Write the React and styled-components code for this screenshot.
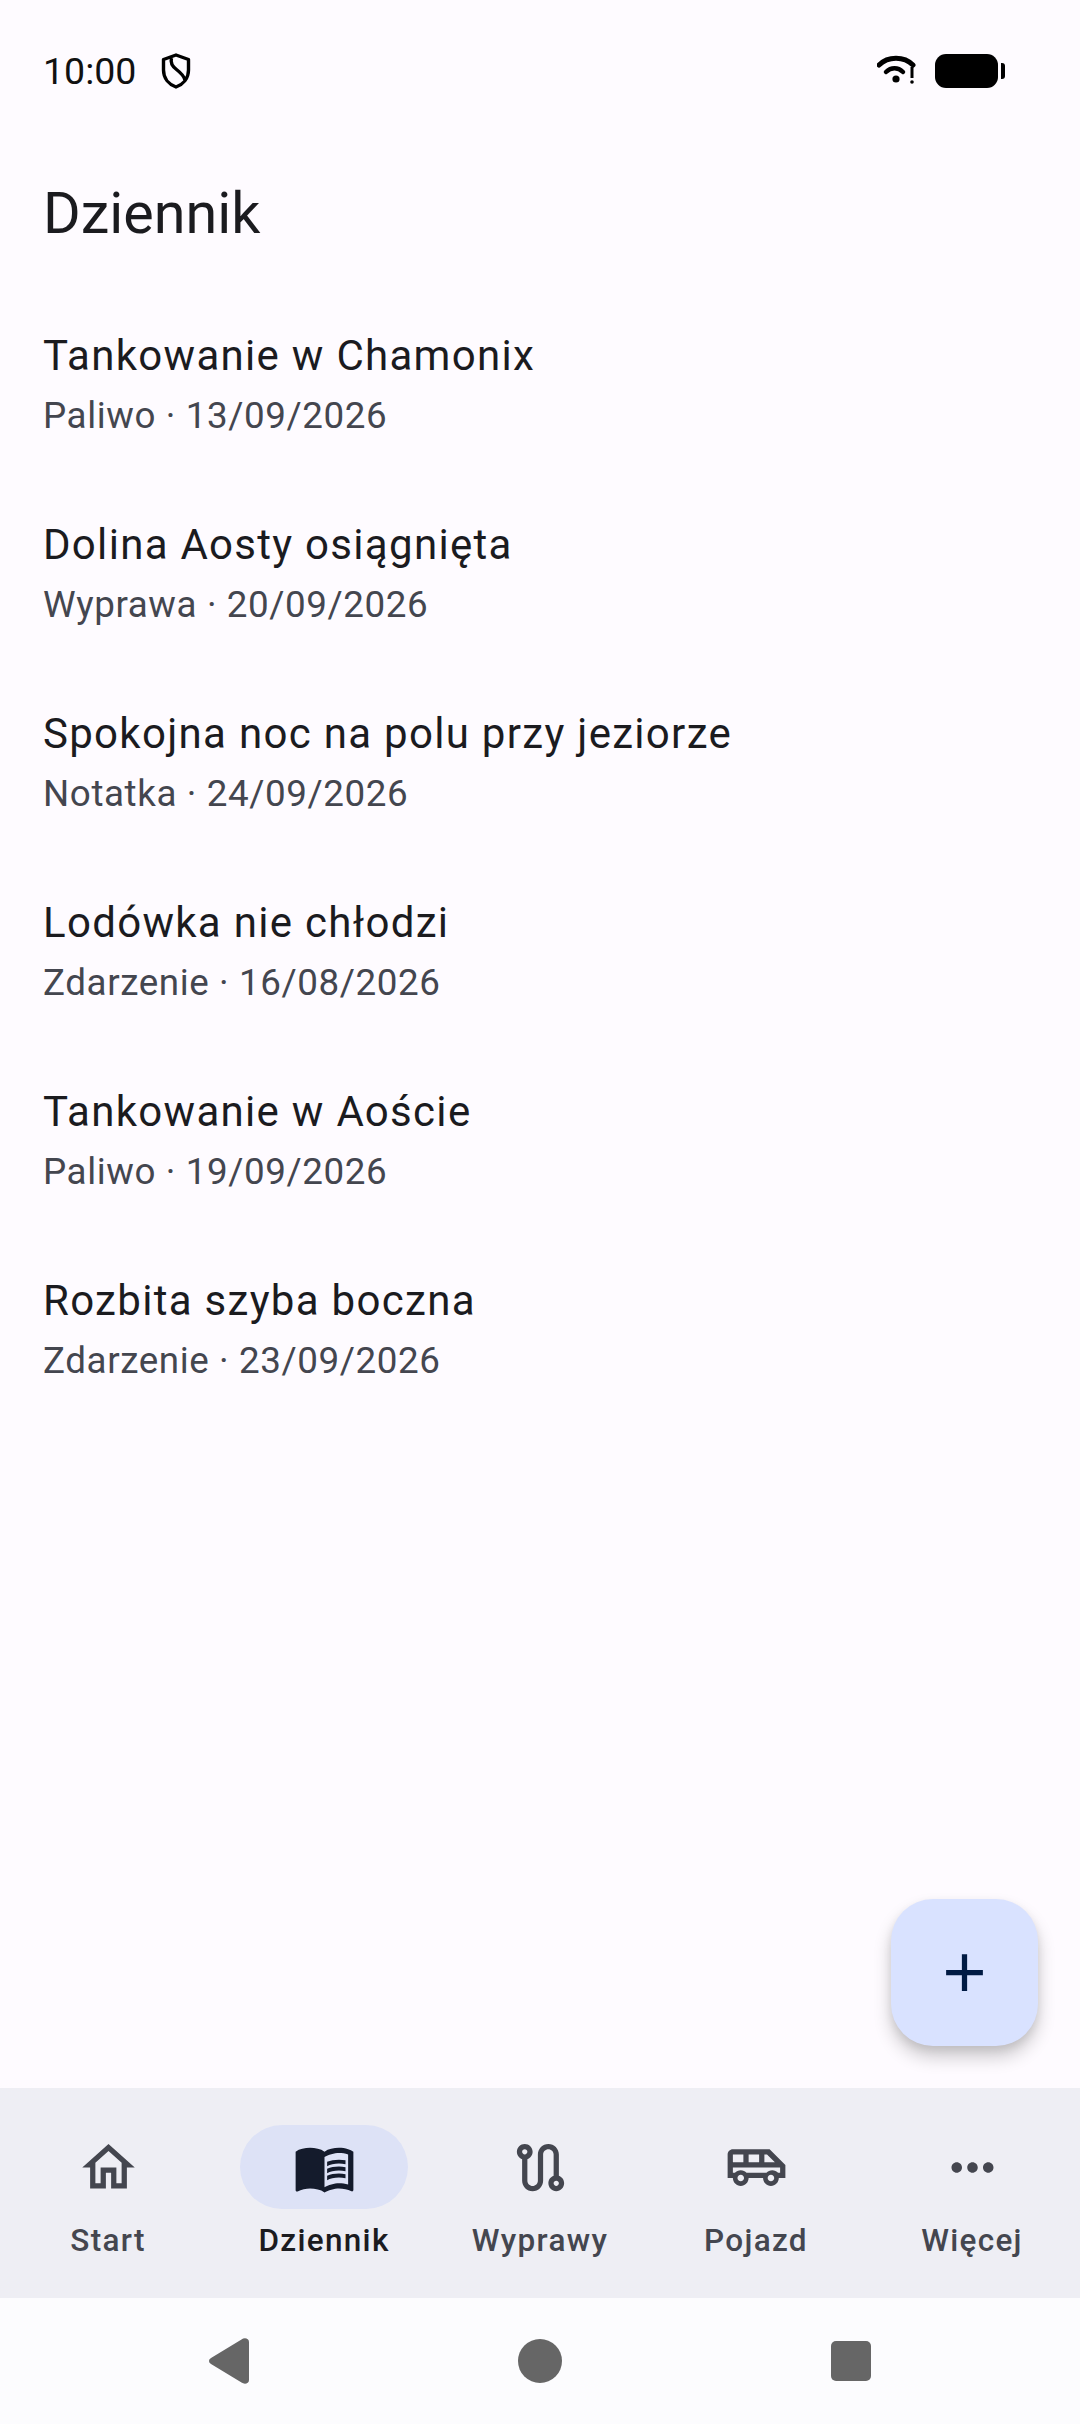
import React from 'react';
import styled, { createGlobalStyle } from 'styled-components';

const ENTRIES = [
  { id: 1, title: 'Tankowanie w Chamonix', meta: 'Paliwo · 13/09/2026' },
  { id: 2, title: 'Dolina Aosty osiągnięta', meta: 'Wyprawa · 20/09/2026' },
  { id: 3, title: 'Spokojna noc na polu przy jeziorze', meta: 'Notatka · 24/09/2026' },
  { id: 4, title: 'Lodówka nie chłodzi', meta: 'Zdarzenie · 16/08/2026' },
  { id: 5, title: 'Tankowanie w Aoście', meta: 'Paliwo · 19/09/2026' },
  { id: 6, title: 'Rozbita szyba boczna', meta: 'Zdarzenie · 23/09/2026' },
];

const HOME = 'M12 5.69l5 4.5V18h-2v-6H9v6H7v-7.81l5-4.5M12 3L2 12h3v8h6v-6h2v6h6v-8h3L12 3z';
const BOOK =
  'M21 5c-1.11-.35-2.33-.5-3.5-.5-1.95 0-4.05.4-5.5 1.5-1.45-1.1-3.55-1.5-5.5-1.5S2.45 4.9 1 6v14.65c0 .25.25.5.5.5.1 0 .15-.05.25-.05C3.1 20.45 5.05 20 6.5 20c1.95 0 4.05.4 5.5 1.5 1.35-.85 3.8-1.5 5.5-1.5 1.65 0 3.35.3 4.75 1.05.1.05.15.05.25.05.25 0 .5-.25.5-.5V6c-.6-.45-1.25-.75-2-1zm0 13.5c-1.1-.35-2.3-.5-3.5-.5-1.7 0-4.15.65-5.5 1.5V8c1.35-.85 3.8-1.5 5.5-1.5 1.2 0 2.4.15 3.5.5v11.5zM17.5 10.5c.88 0 1.73.09 2.5.26V9.24c-.79-.15-1.64-.24-2.5-.24-1.7 0-3.24.29-4.5.83v1.66c1.13-.64 2.7-.99 4.5-.99zM13 12.49v1.66c1.13-.64 2.7-.99 4.5-.99.88 0 1.73.09 2.5.26V11.9c-.79-.15-1.64-.24-2.5-.24-1.7 0-3.24.3-4.5.83zM17.5 14.33c-1.7 0-3.24.29-4.5.83v1.66c1.13-.64 2.7-.99 4.5-.99.88 0 1.73.09 2.5.26v-1.52c-.79-.16-1.64-.24-2.5-.24z';
const ROUTE =
  'M19 15.18V7c0-2.21-1.79-4-4-4s-4 1.79-4 4v10c0 1.1-.9 2-2 2s-2-.9-2-2V8.82C8.16 8.4 9 7.3 9 6c0-1.66-1.34-3-3-3S3 4.34 3 6c0 1.3.84 2.4 2 2.82V17c0 2.21 1.79 4 4 4s4-1.79 4-4V7c0-1.1.9-2 2-2s2 .9 2 2v8.18c-1.16.41-2 1.51-2 2.82 0 1.66 1.34 3 3 3s3-1.34 3-3c0-1.3-.84-2.4-2-2.82zM6 7c-.55 0-1-.45-1-1s.45-1 1-1 1 .45 1 1-.45 1-1 1zm12 12c-.55 0-1-.45-1-1s.45-1 1-1 1 .45 1 1-.45 1-1 1z';
const SHUTTLE =
  'M17 5H3c-1.1 0-2 .89-2 2v9h2c0 1.65 1.34 3 3 3s3-1.35 3-3h5.5c0 1.65 1.34 3 3 3s3-1.35 3-3H23v-5l-6-6zm-2 2h1l3 3h-4V7zM9 7h4v3H9V7zM3 7h4v3H3V7zm3 10.25c-.69 0-1.25-.56-1.25-1.25s.56-1.25 1.25-1.25 1.25.56 1.25 1.25-.56 1.25-1.25 1.25zm11.5 0c-.69 0-1.25-.56-1.25-1.25s.56-1.25 1.25-1.25 1.25.56 1.25 1.25-.56 1.25-1.25 1.25zM21 14h-.78c-.55-.61-1.34-1-2.22-1s-1.67.39-2.22 1H8.22c-.55-.61-1.33-1-2.22-1s-1.67.39-2.22 1H3v-2h18v2z';
const MORE =
  'M6 10c-1.1 0-2 .9-2 2s.9 2 2 2 2-.9 2-2-.9-2-2-2zm12 0c-1.1 0-2 .9-2 2s.9 2 2 2 2-.9 2-2-.9-2-2-2zm-6 0c-1.1 0-2 .9-2 2s.9 2 2 2 2-.9 2-2-.9-2-2-2z';
const ADD = 'M19 13h-6v6h-2v-6H5v-2h6V5h2v6h6v2z';

const TABS = [
  { id: 'start', label: 'Start', icon: HOME },
  { id: 'log', label: 'Dziennik', icon: BOOK, active: true },
  { id: 'trips', label: 'Wyprawy', icon: ROUTE },
  { id: 'vehicle', label: 'Pojazd', icon: SHUTTLE },
  { id: 'more', label: 'Więcej', icon: MORE },
];

const App = () => (
  <Page>
    <GlobalStyle />
    <StatusBar>
      <StatusGroup $gap={25}>
        <Clock>10:00</Clock>
        <svg width="30" height="36" viewBox="0 0 30 36" fill="none" stroke="#000" strokeWidth="3.4">
          <path d="M15 2 L27.5 6.5 V17 C27.5 25.5 22 31.5 15 34 C8 31.5 2.5 25.5 2.5 17 V6.5 Z" strokeLinejoin="round" />
          <path d="M10.5 5 C9 10.5 11.5 13.5 15.5 16.5 C20 20 23 23 24 27" />
        </svg>
      </StatusGroup>
      <StatusGroup $gap={18}>
        <svg width="40" height="32" viewBox="0 0 40 32" fill="none" stroke="#000" strokeLinecap="round">
          <path d="M2 10 C11 1 27 1 36 10" strokeWidth="5" />
          <path d="M9 17 C14 12 21 12 26 17" strokeWidth="4.5" />
          <circle cx="19" cy="24" r="3.6" fill="#000" stroke="none" />
          <path d="M35 12 V23" strokeWidth="3" strokeLinecap="butt" />
          <circle cx="35" cy="27" r="1.8" fill="#000" stroke="none" />
        </svg>
        <Battery />
      </StatusGroup>
    </StatusBar>
    <Header>Dziennik</Header>
    <Main>
      <List>
        {ENTRIES.map(entry => (
          <Row key={entry.id}>
            <RowTitle>{entry.title}</RowTitle>
            <RowMeta>{entry.meta}</RowMeta>
          </Row>
        ))}
      </List>
      <Fab>
        <svg width="63" height="63" viewBox="0 0 24 24" fill="#001A43">
          <path d={ADD} />
        </svg>
      </Fab>
    </Main>
    <BottomNav>
      {TABS.map(tab => (
        <Tab key={tab.id}>
          <Pill $active={tab.active}>
            <svg width="63" height="63" viewBox="0 0 24 24" fill={tab.active ? '#141B2C' : '#44464F'}>
              <path d={tab.icon} />
            </svg>
          </Pill>
          <TabLabel $active={tab.active}>{tab.label}</TabLabel>
        </Tab>
      ))}
    </BottomNav>
    <SystemBar>
      <svg width="40" height="46" viewBox="0 0 40 46" fill="#666">
        <path d="M32.5 1.5 C35 -0.5 40 0 40 4 V42 C40 46 35 46.5 32.5 44.5 L2 26 C-0.6 24.5 -0.6 21.5 2 20 Z" />
      </svg>
      <HomeDot />
      <RecentSquare />
    </SystemBar>
  </Page>
);

const GlobalStyle = createGlobalStyle`
  html, body {
    margin: 0;
    padding: 0;
    background: #fefbff;
  }
  body {
    font-family: Roboto, "Noto Sans", sans-serif;
  }
  svg {
    display: block;
  }
`;

const Page = styled.div`
  display: flex;
  flex-direction: column;
  width: 1080px;
  height: 2424px;
  overflow: hidden;
  background: #fefbff;
`;

const StatusBar = styled.div`
  display: flex;
  align-items: center;
  justify-content: space-between;
  box-sizing: border-box;
  height: 122px;
  padding: 20px 82px 0 43px;
`;

const StatusGroup = styled.div`
  display: flex;
  align-items: center;
  gap: ${p => p.$gap}px;
`;

const Clock = styled.span`
  font-size: 37.5px;
  line-height: 42px;
  color: #111;
`;

const Battery = styled.div`
  position: relative;
  width: 63px;
  height: 34px;
  border-radius: 11px;
  background: #000;

  &::after {
    content: '';
    position: absolute;
    top: 9px;
    right: -7px;
    width: 4px;
    height: 16px;
    border-radius: 0 3px 3px 0;
    background: #000;
  }
`;

const Header = styled.h1`
  display: flex;
  align-items: center;
  box-sizing: border-box;
  height: 168px;
  margin: 0;
  padding: 14px 43px 0;
  font-size: 57.5px;
  font-weight: 400;
  color: #1b1b1f;
`;

const Main = styled.main`
  position: relative;
  flex: 1;
`;

const List = styled.div`
  display: flex;
  flex-direction: column;
`;

const Row = styled.div`
  display: flex;
  flex-direction: column;
  justify-content: center;
  gap: 3px;
  box-sizing: border-box;
  height: 189px;
  padding: 0 43px 2px;
`;

const RowTitle = styled.div`
  font-size: 42px;
  line-height: 63px;
  letter-spacing: 1.3px;
  color: #1b1b1f;
`;

const RowMeta = styled.div`
  font-size: 36.75px;
  line-height: 52.5px;
  letter-spacing: 0.6px;
  color: #44464f;
`;

const Fab = styled.div`
  position: absolute;
  right: 42px;
  bottom: 42px;
  display: flex;
  align-items: center;
  justify-content: center;
  width: 147px;
  height: 147px;
  border-radius: 42px;
  background: #d9e2ff;
  box-shadow: 0 11px 18px rgba(0, 0, 0, 0.2), 0 4px 8px rgba(0, 0, 0, 0.08);
`;

const BottomNav = styled.nav`
  display: grid;
  grid-template-columns: repeat(5, 1fr);
  height: 210px;
  background: #eeeef4;
`;

const Tab = styled.div`
  display: flex;
  flex-direction: column;
  align-items: center;
  padding-top: 37px;
`;

const Pill = styled.div`
  display: flex;
  align-items: center;
  justify-content: center;
  width: 168px;
  height: 84px;
  border-radius: 42px;
  background: ${p => (p.$active ? '#dde2f6' : 'transparent')};
`;

const TabLabel = styled.span`
  margin-top: 11px;
  font-size: 31.5px;
  line-height: 42px;
  font-weight: 500;
  letter-spacing: 1.3px;
  color: ${p => (p.$active ? '#1b1b1f' : '#44464f')};
`;

const SystemBar = styled.div`
  display: grid;
  grid-template-columns: repeat(3, 311px);
  justify-content: center;
  align-items: center;
  justify-items: center;
  flex: none;
  height: 126px;
  background: #fcfcfe;
`;

const HomeDot = styled.div`
  width: 44px;
  height: 44px;
  border-radius: 50%;
  background: #666;
`;

const RecentSquare = styled.div`
  width: 40px;
  height: 40px;
  border-radius: 5px;
  background: #666;
`;

export default App;
